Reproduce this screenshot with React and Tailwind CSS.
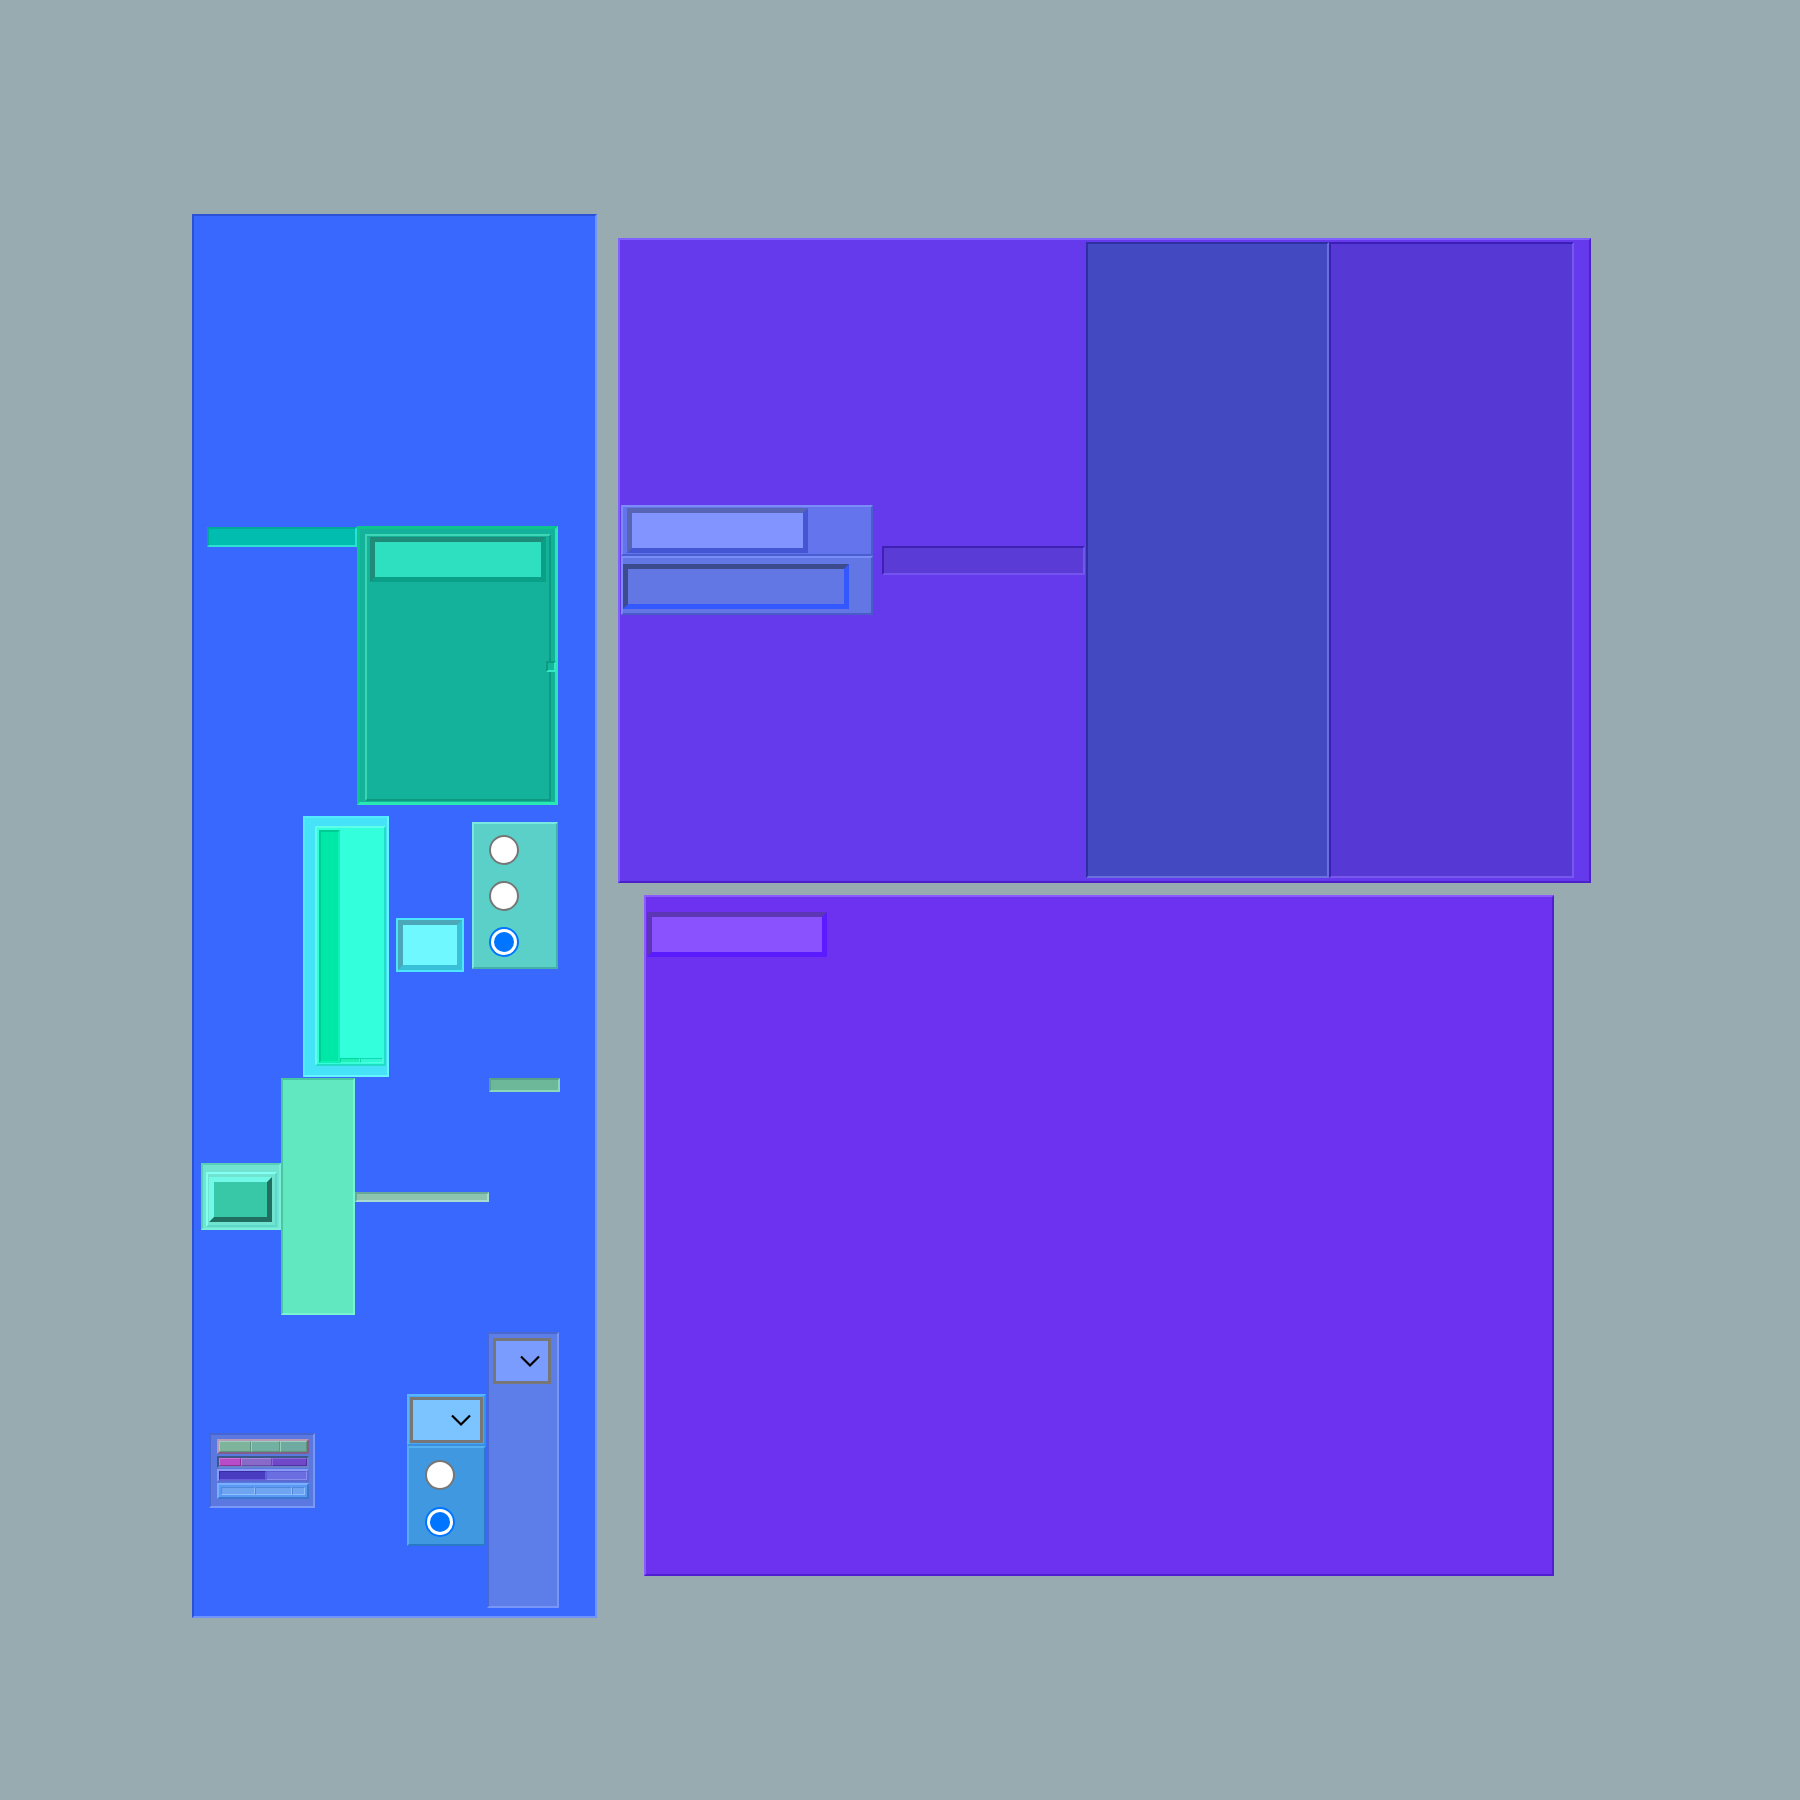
function Chevron() {
  return (
    <svg width="22" height="13" viewBox="0 0 22 13" fill="none" stroke="#000" strokeWidth="2.2">
      <polyline points="2,1.5 11,10.5 20,1.5" />
    </svg>
  );
}

function Radio({ checked }) {
  if (checked) {
    return (
      <div className="w-[30px] h-[30px] rounded-full bg-[#0075ff] flex items-center justify-center">
        <div className="w-[26px] h-[26px] rounded-full bg-white flex items-center justify-center">
          <div className="w-[20px] h-[20px] rounded-full bg-[#0075ff]" />
        </div>
      </div>
    );
  }
  return <div className="w-[30px] h-[30px] rounded-full bg-white border-2 border-[#767676]" />;
}

function Cell({ className }) {
  return <div className={"h-full border " + className} />;
}

function MiniTable() {
  return (
    <div className="ml-[15px] w-[106px] h-[75px] bg-[#5a78e0] border-2 border-t-[#4866d2] border-l-[#4866d2] border-r-[#7a98f8] border-b-[#7a98f8] pl-[6px] pr-[4px] pt-[4px] flex flex-col">
      <div className="h-[15px] flex border-2 border-t-[#b89ab8] border-l-[#b89ab8] border-r-[#80608a] border-b-[#80608a] bg-[#9a7ca8]">
        <Cell className="w-[32px] bg-[#7eb49c] border-t-[#9ccfb8] border-l-[#9ccfb8] border-r-[#5e9480] border-b-[#5e9480]" />
        <Cell className="w-[29px] bg-[#72b0a2] border-t-[#9ccfb8] border-l-[#9ccfb8] border-r-[#5e9480] border-b-[#5e9480]" />
        <Cell className="flex-1 bg-[#6eaaa0] border-t-[#9ccfb8] border-l-[#9ccfb8] border-r-[#5e9480] border-b-[#5e9480]" />
      </div>
      <div className="mt-[2px] h-[12px] flex border-2 border-t-[#3a5888] border-l-[#3a5888] border-r-[#6a80c8] border-b-[#6a80c8] bg-[#5a68b8]">
        <Cell className="w-[22px] bg-[#b84cc8] border-t-[#d070d8] border-l-[#d070d8] border-r-[#8a3098] border-b-[#8a3098]" />
        <Cell className="w-[31px] bg-[#8a6ac8] border-t-[#a48ad8] border-l-[#a48ad8] border-r-[#6a4aa8] border-b-[#6a4aa8]" />
        <Cell className="flex-1 bg-[#7048c8] border-t-[#8a68d8] border-l-[#8a68d8] border-r-[#5030a8] border-b-[#5030a8]" />
      </div>
      <div className="mt-[1px] h-[13px] flex border-2 border-t-[#8a9af8] border-l-[#8a9af8] border-r-[#5a6ad0] border-b-[#5a6ad0] bg-[#6a78e8]">
        <Cell className="w-[47px] bg-[#4a3cc0] border-t-[#3a2ca0] border-l-[#3a2ca0] border-r-[#6a5ce0] border-b-[#6a5ce0]" />
        <Cell className="flex-1 bg-[#6a6ee0] border-t-[#5a5ed0] border-l-[#5a5ed0] border-r-[#8a8ef0] border-b-[#8a8ef0]" />
      </div>
      <div className="mt-[1px] h-[16px] flex items-center border-2 border-t-[#78b0ff] border-l-[#78b0ff] border-r-[#3a78d0] border-b-[#3a78d0] bg-[#5a9af5] px-[2px]">
        <Cell className="w-[34px] !h-[8px] bg-[#6ea4f0] border-t-[#5088d8] border-l-[#5088d8] border-r-[#90c0ff] border-b-[#90c0ff]" />
        <Cell className="w-[37px] !h-[8px] bg-[#6ea4f0] border-t-[#5088d8] border-l-[#5088d8] border-r-[#90c0ff] border-b-[#90c0ff]" />
        <Cell className="flex-1 !h-[8px] bg-[#6ea4f0] border-t-[#5088d8] border-l-[#5088d8] border-r-[#90c0ff] border-b-[#90c0ff]" />
      </div>
    </div>
  );
}

export default function App() {
  return (
    <div className="w-[1800px] min-h-[1800px] bg-[#97abb0] flex items-start pl-[192px] pt-[214px]">
      {/* blue column */}
      <div className="w-[405px] h-[1404px] shrink-0 bg-[#3968ff] border-2 border-t-[#2b52d6] border-l-[#2b52d6] border-r-[#7094fa] border-b-[#7094fa] flex flex-col pt-[310px]">
        {/* row A */}
        <div className="flex items-start h-[279px]">
          <div className="ml-[13px] mt-[1px] w-[150px] h-[20px] bg-[#00bdb0] border-2 border-t-[#00a99a] border-l-[#00a99a] border-r-[#2ee0d4] border-b-[#2ee0d4]" />
          <div className="relative w-[201px] h-[279px] bg-[#14b29a] border-[3px] border-t-[#0cc58a] border-l-[#0cc58a] border-r-[#2ae8b4] border-b-[#2ae8b4] pt-[5px] pl-[5px] pr-[4px] pb-[1px] flex">
            <div className="flex-1 bg-[#14b29a] border-2 border-t-[#3cd6b6] border-l-[#3cd6b6] border-r-[#0e9a80] border-b-[#0e9a80] pt-[1px] pl-[3px]">
              <div className="w-[176px] h-[45px] bg-[#2ee0c0] border-[5px] border-t-[#1e8c78] border-l-[#1e8c78] border-r-[#0aa088] border-b-[#0aa088]" />
            </div>
            <div className="absolute right-[-1px] top-[132px] w-[10px] h-[11px] bg-[#12b898] border-2 border-t-[#0c9a80] border-l-[#0c9a80] border-r-[#36e8c8] border-b-[#36e8c8]" />
          </div>
        </div>

        {/* row B */}
        <div className="mt-[11px] flex items-center h-[261px]">
          <div className="ml-[109px] w-[86px] h-[261px] bg-[#45e2f8] border-2 border-t-[#52eafc] border-l-[#52eafc] border-r-[#66f4ff] border-b-[#66f4ff] pt-[8px] pl-[10px] pr-[1px] pb-[9px] flex">
            <div className="flex-1 bg-[#33ffdd] border-2 border-t-[#5cffe8] border-l-[#5cffe8] border-r-[#22dcc4] border-b-[#22dcc4] pt-[2px] pl-[2px] pr-[1px] pb-[1px] flex items-end">
              <div className="w-[21px] h-full bg-[#00e8a8] border-2 border-t-[#00cc94] border-l-[#00cc94] border-r-[#10f0b4] border-b-[#10f0b4]" />
              <div className="flex-1 h-[5px] flex">
                <div className="w-[20px] h-full bg-[#20f0b8] border border-t-[#00d8a0] border-l-[#00d8a0] border-r-[#40ffd0] border-b-[#40ffd0]" />
                <div className="flex-1 h-full bg-[#30f8d0] border border-t-[#10d8b0] border-l-[#10d8b0] border-r-[#50ffe0] border-b-[#50ffe0]" />
              </div>
            </div>
          </div>
          <div className="ml-[7px] mb-[4px] w-[68px] h-[54px] border-2 border-[#4ce6ff]">
            <div className="w-full h-full bg-[#6ff8ff] border-[5px] border-t-[#4aa8b8] border-l-[#4aa8b8] border-r-[#38c0d8] border-b-[#38c0d8]" />
          </div>
          <div className="ml-[8px] self-start mt-[6px] w-[86px] h-[147px] bg-[#5bd0c8] border-2 border-t-[#78e8e0] border-l-[#78e8e0] border-r-[#45b0a8] border-b-[#45b0a8] pl-[15px] pt-[11px] flex flex-col gap-[16px]">
            <Radio />
            <Radio />
            <Radio checked />
          </div>
        </div>

        {/* row C */}
        <div className="mt-[1px] flex items-center h-[237px]">
          <div className="ml-[7px] w-[80px] h-[67px] bg-[#70e4d0] border-2 border-t-[#58d0b8] border-l-[#58d0b8] border-r-[#7ceedc] border-b-[#7ceedc] pl-[3px] pt-[7px] pr-[2px] pb-[1px] flex">
            <div className="flex-1 border-2 border-t-[#84fff2] border-l-[#84fff2] border-r-[#5cd8c8] border-b-[#5cd8c8] pl-[1px] pt-[3px] pr-[3px] pb-[3px] flex">
              <div className="flex-1 bg-[#38c8a8] border-[5px] border-t-[#72f8e6] border-l-[#72f8e6] border-r-[#1f7060] border-b-[#1f7060]" />
            </div>
          </div>
          <div className="w-[74px] h-[237px] bg-[#62e8c0] border-2 border-t-[#48c8a0] border-l-[#48c8a0] border-r-[#7af4d4] border-b-[#7af4d4]" />
          <div className="w-[134px] h-[10px] bg-[#8cc4b0] border-2 border-t-[#68a898] border-l-[#68a898] border-r-[#a8dcd0] border-b-[#a8dcd0]" />
          <div className="self-start w-[71px] h-[14px] bg-[#6db898] border-2 border-t-[#58a088] border-l-[#58a088] border-r-[#8ad8b8] border-b-[#8ad8b8]" />
        </div>

        {/* row D */}
        <div className="mt-[17px] flex items-center h-[276px]">
          <MiniTable />
          <div className="ml-[92px] w-[79px] flex flex-col">
            <div className="h-[52px] bg-[#48a8f8] border-2 border-t-[#58b4ff] border-l-[#58b4ff] border-r-[#3a90e0] border-b-[#3a90e0] p-[1px]">
              <div className="w-full h-full bg-[#7cc4ff] border-[3px] border-[#777777] flex items-center justify-end pr-[8px]">
                <Chevron />
              </div>
            </div>
            <div className="h-[100px] bg-[#4098e0] border-2 border-t-[#55b0f0] border-l-[#55b0f0] border-r-[#2a78c8] border-b-[#2a78c8] pl-[16px] pt-[12px] flex flex-col gap-[17px]">
              <Radio />
              <Radio checked />
            </div>
          </div>
          <div className="ml-[1px] w-[72px] h-[276px] bg-[#5d7ee8] border-2 border-t-[#4a68d0] border-l-[#4a68d0] border-r-[#7896f8] border-b-[#7896f8] pl-[4px] pt-[4px]">
            <div className="w-[58px] h-[46px] bg-[#7b9cff] border-[3px] border-[#777777] flex items-center justify-end pr-[7px]">
              <Chevron />
            </div>
          </div>
        </div>
      </div>

      {/* purple column */}
      <div className="ml-[21px] pt-[24px] flex flex-col">
        <div className="w-[973px] h-[645px] bg-[#643aec] border-2 border-t-[#8060ff] border-l-[#8060ff] border-r-[#4a22c8] border-b-[#4a22c8] pt-[2px] pb-[3px] pr-[15px] flex">
          <div className="w-[466px] flex items-center pl-[1px]">
            <div className="w-[252px] flex flex-col">
              <div className="h-[51px] bg-[#6474ec] border-2 border-t-[#7b8cf6] border-l-[#7b8cf6] border-r-[#4a5ed0] border-b-[#4a5ed0] pl-[4px] flex items-center">
                <div className="w-[181px] h-[45px] bg-[#8294ff] border-[5px] border-t-[#5864b4] border-l-[#5864b4] border-r-[#4456d4] border-b-[#4456d4]" />
              </div>
              <div className="h-[59px] bg-[#6276e4] border-2 border-t-[#7a8cf8] border-l-[#7a8cf8] border-r-[#4a5cc8] border-b-[#4a5cc8] pt-[6px]">
                <div className="w-[226px] h-[45px] bg-[#6276e4] border-[5px] border-t-[#3c4a8e] border-l-[#3c4a8e] border-r-[#3458ff] border-b-[#3458ff]" />
              </div>
            </div>
            <div className="ml-[9px] w-[203px] h-[29px] bg-[#5a3bd6] border-2 border-t-[#3e20b2] border-l-[#3e20b2] border-r-[#7454ee] border-b-[#7454ee]" />
          </div>
          <div className="w-[243px] bg-[#4349c0] border-2 border-t-[#2d2fa2] border-l-[#2d2fa2] border-r-[#6a70e0] border-b-[#6a70e0]" />
          <div className="w-[245px] bg-[#5639d4] border-2 border-t-[#3b1eb6] border-l-[#3b1eb6] border-r-[#7658ec] border-b-[#7658ec]" />
        </div>

        <div className="ml-[26px] mt-[12px] w-[910px] h-[681px] bg-[#6d32f0] border-2 border-t-[#8a5cff] border-l-[#8a5cff] border-r-[#5020d0] border-b-[#5020d0] pl-[1px] pt-[15px]">
          <div className="w-[180px] h-[45px] bg-[#8a52ff] border-[5px] border-t-[#5c36b4] border-l-[#5c36b4] border-r-[#5a1cff] border-b-[#5a1cff]" />
        </div>
      </div>
    </div>
  );
}
